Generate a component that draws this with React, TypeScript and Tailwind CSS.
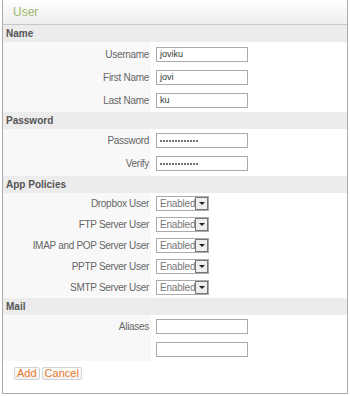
import React from 'react';

const Row: React.FC<{ label?: string; h: string; children?: React.ReactNode }> = ({ label, h, children }) => (
  <div className={`flex ${h}`}>
    <div className="w-[148px] bg-[#f8f8f8] flex items-center justify-end pr-[2px] text-[#666] tracking-[-0.3px]">{label}</div>
    <div className="flex-1 flex items-center pl-[5px]">{children}</div>
  </div>
);

const Dots: React.FC = () => (
  <div className="flex gap-[1px]">
    {Array.from({ length: 13 }).map((_, i) => (
      <div key={i} className="w-[2px] h-[2px] rounded-full bg-[#444]" />
    ))}
  </div>
);

const Input: React.FC<{ value?: string; password?: boolean }> = ({ value = '', password }) => (
  <div className="w-[92px] h-[15px] border border-[#aaa] bg-white flex items-center px-[3px] text-[9px] text-[#333] leading-none">
    {password ? <Dots /> : value}
  </div>
);

const Select: React.FC = () => (
  <div className="flex h-[15px] w-[53px] border border-[#aaa] bg-white items-center">
    <span className="flex-1 pl-[3px] text-[10px] text-[#777] leading-none tracking-[-0.2px]">Enabled</span>
    <div className="w-[13px] h-[13px] border border-[#777] bg-[#eee] flex items-center justify-center">
      <div className="w-0 h-0 border-l-[3px] border-r-[3px] border-t-[3px] border-l-transparent border-r-transparent border-t-[#222]" />
    </div>
  </div>
);

const Bar: React.FC<{ title: string }> = ({ title }) => (
  <div className="h-[17px] bg-[#ececec] flex items-center pl-[3px] font-bold text-[10px] text-[#555]">{title}</div>
);

const App: React.FC = () => {
  return (
    <div className="w-[350px] h-[396px] bg-white" style={{ fontFamily: '"Liberation Sans", Arial, sans-serif' }}>
      <div className="ml-[2px] w-[346px] h-[394px] border-l border-r border-b border-[#aaa] text-[10px] flex flex-col">
        <div className="h-[25px] bg-gradient-to-b from-white to-[#eeeeee] border-b border-[#c8c8c8] flex items-center pl-[10px] text-[12px] text-[#9cb86c]">
          User
        </div>
        <Bar title="Name" />
        <div>
          <Row h="h-[1px]" />
          <Row label="Username" h="h-[23px]"><Input value="joviku" /></Row>
          <Row label="First Name" h="h-[23px]"><Input value="jovi" /></Row>
          <Row label="Last Name" h="h-[23px]"><Input value="ku" /></Row>
        </div>
        <Bar title="Password" />
        <div>
          <Row label="Password" h="h-[23px]"><Input password /></Row>
          <Row label="Verify" h="h-[23px]"><Input password /></Row>
          <Row h="h-[1px]" />
        </div>
        <Bar title="App Policies" />
        <div>
          <Row label="Dropbox User" h="h-[21px]"><Select /></Row>
          <Row label="FTP Server User" h="h-[21px]"><Select /></Row>
          <Row label="IMAP and POP Server User" h="h-[21px]"><Select /></Row>
          <Row label="PPTP Server User" h="h-[21px]"><Select /></Row>
          <Row label="SMTP Server User" h="h-[21px]"><Select /></Row>
        </div>
        <Bar title="Mail" />
        <div>
          <Row label="Aliases" h="h-[23px]"><Input /></Row>
          <Row h="h-[23px]"><Input /></Row>
        </div>
        <div className="flex gap-[2px] pl-[11px] pt-[6px]">
          <button className="h-[13px] px-[2px] border border-[#d4d4d4] rounded-[2px] bg-gradient-to-b from-white to-[#f0f0f0] text-[11px] leading-none text-[#e8782a]">Add</button>
          <button className="h-[13px] px-[2px] border border-[#d4d4d4] rounded-[2px] bg-gradient-to-b from-white to-[#f0f0f0] text-[11px] leading-none text-[#e8782a]">Cancel</button>
        </div>
      </div>
    </div>
  );
};

export default App;
